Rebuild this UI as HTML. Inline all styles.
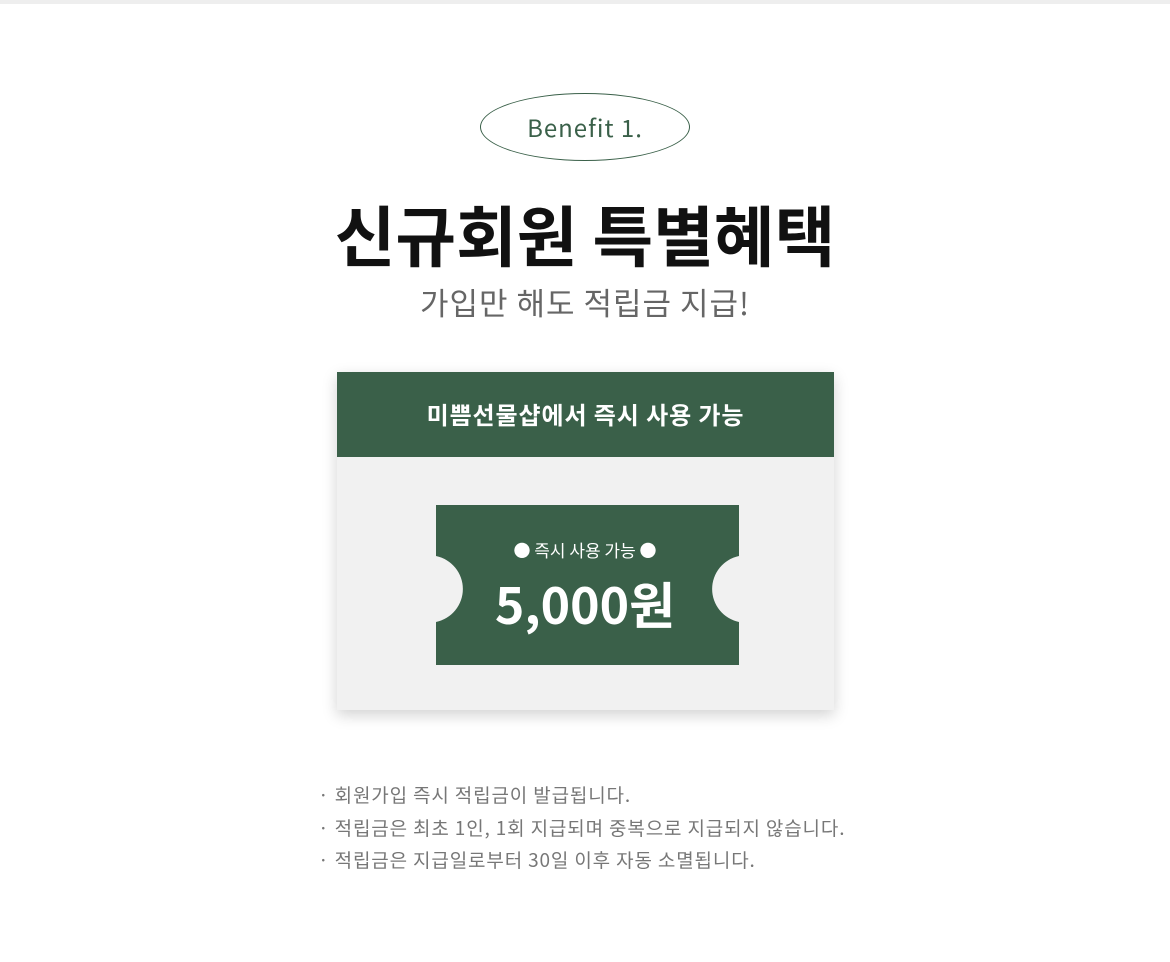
<!DOCTYPE html>
<html><head><meta charset="utf-8"><style>
body{margin:0;width:1170px;height:962px;background:#fff;position:relative;font-family:"Liberation Sans","Noto Sans CJK KR",sans-serif;overflow:hidden}
.top{position:absolute;top:0;left:0;width:1170px;height:4px;background:#eee}
.pill{position:absolute;left:480px;top:93px;width:208px;height:66px;border:1.5px solid #3a6049;border-radius:50%;text-align:center;line-height:66px;font-size:24px;letter-spacing:1px;color:#3a6049;font-family:"Noto Sans CJK KR",sans-serif}
.t{position:absolute;left:0;width:1170px;text-align:center}
.card{position:absolute;left:337px;top:372px;width:497px;height:338px;background:#f1f1f1;box-shadow:0 5px 14px rgba(0,0,0,.18)}
.hd{height:85px;background:#3a6049;color:#fff;text-align:center;line-height:84px;font-size:24px;letter-spacing:.9px;font-weight:bold;font-family:"Noto Sans CJK KR",sans-serif}
.notes{position:absolute;left:318px;top:779px;font-size:19px;letter-spacing:.85px;color:#777;line-height:32.5px;font-family:"Noto Sans CJK KR",sans-serif}
</style></head><body>
<div class="top"></div>
<div class="pill">Benefit 1.</div>
<div class="t" style="top:186px;font-size:66px;font-weight:bold;color:#111;font-family:'Noto Sans CJK KR',sans-serif;line-height:94px">신규회원 특별혜택</div>
<div class="t" style="top:280px;font-size:31px;color:#666;font-family:'Noto Sans CJK KR',sans-serif;line-height:44px;letter-spacing:1px">가입만 해도 적립금 지급!</div>
<div class="card"><div class="hd">미쁨선물샵에서 즉시 사용 가능</div></div>
<svg style="position:absolute;left:436px;top:505px" width="303" height="160"><path d="M0 0H303V51A33.7 33.7 0 0 0 303 117V160H0V117A33.7 33.7 0 0 0 0 51Z" fill="#3a6049"/></svg>
<div class="t" style="top:535px;font-size:17px;color:#fff;font-family:'Noto Sans CJK KR',sans-serif;line-height:30px">● 즉시 사용 가능 ●</div>
<div class="t" style="top:568px;font-size:50px;font-weight:bold;color:#fff;font-family:'Noto Sans CJK KR',sans-serif;line-height:70px">5,000원</div>
<div class="notes">· 회원가입 즉시 적립금이 발급됩니다.<br>· 적립금은 최초 1인, 1회 지급되며 중복으로 지급되지 않습니다.<br>· 적립금은 지급일로부터 30일 이후 자동 소멸됩니다.</div>
</body></html>
